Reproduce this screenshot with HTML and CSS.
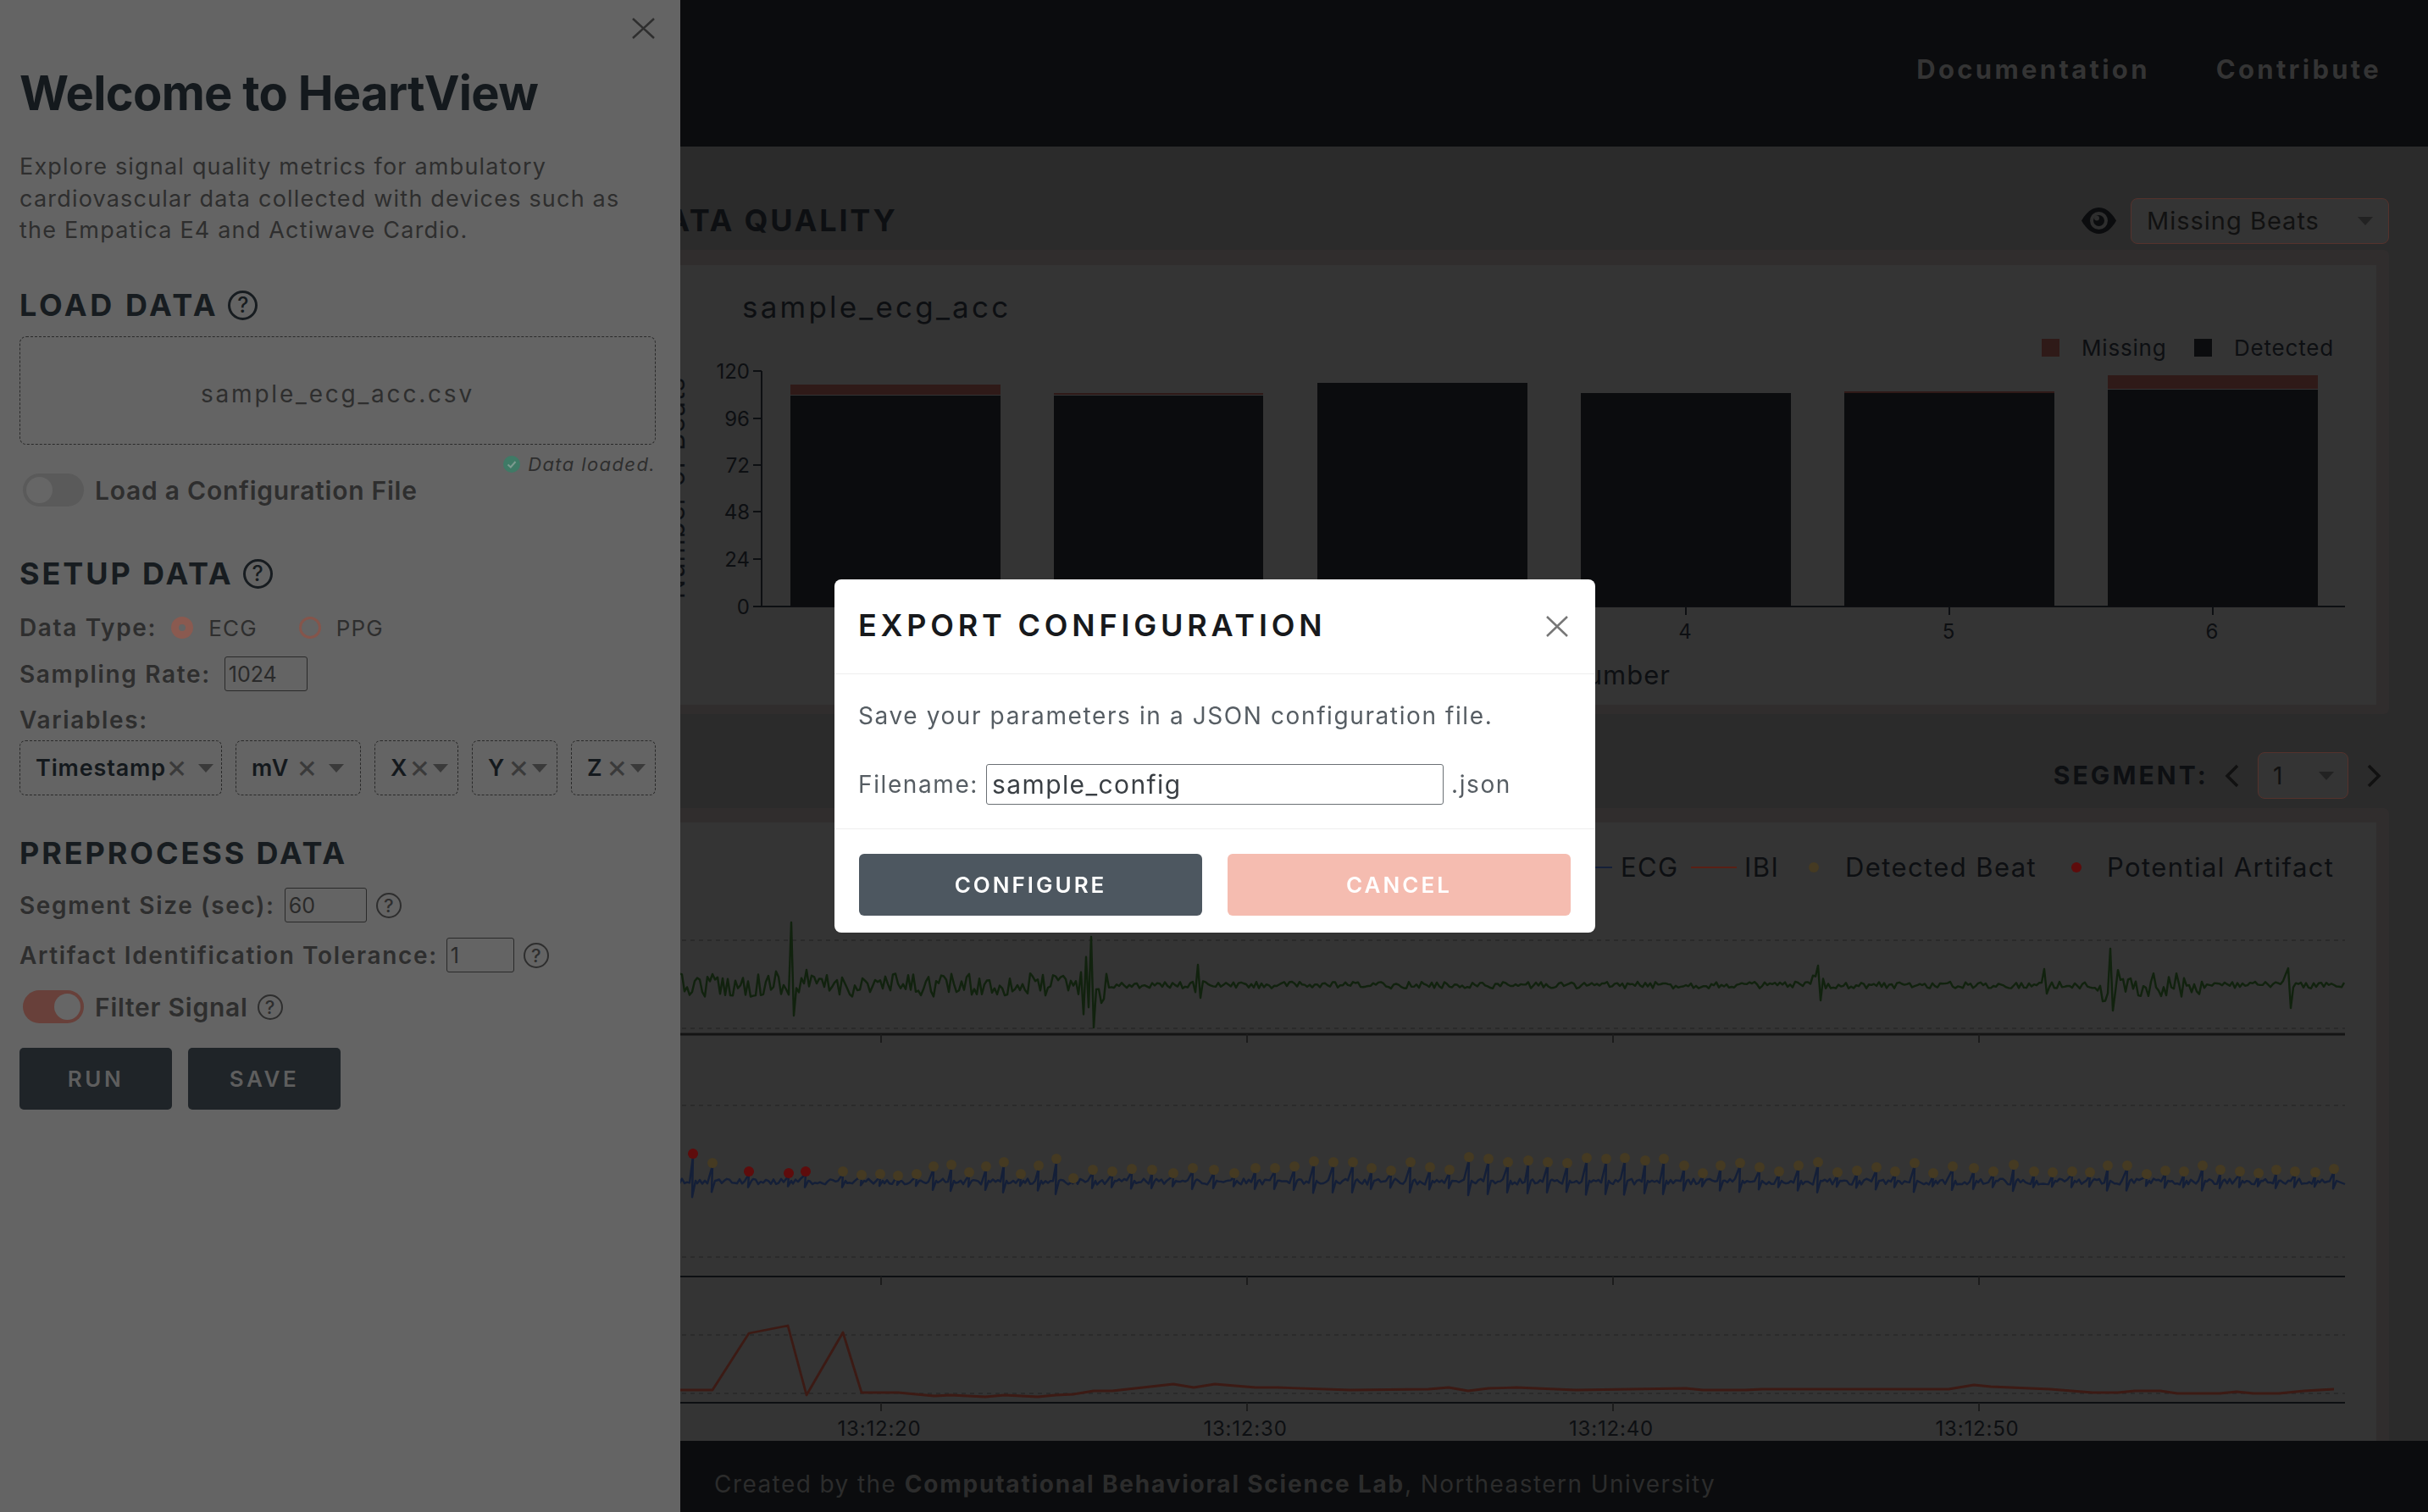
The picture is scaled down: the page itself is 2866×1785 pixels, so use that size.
FILE: index.html
```html
<!DOCTYPE html>
<html lang="en">
<head>
    <meta charset="UTF-8">
    <title>HeartView</title>
    <link rel="stylesheet" href="styles.css">
</head>
<body>

<header class="topbar">
    <a class="nav-link" href="#">Documentation</a>
    <a class="nav-link" href="#">Contribute</a>
</header>

<main class="content">
    <div class="section-head quality-head">
        <h2 class="section-title">DATA QUALITY</h2>
        <div class="head-controls">
            <svg class="eye" viewBox="0 0 41 31">
                <path class="eye-shape" d="M0 15.5C6 5 13 0 20.5 0S35 5 41 15.5C35 26 28 31 20.5 31S6 26 0 15.5Z"/>
                <circle class="eye-ring" cx="20.5" cy="15.5" r="10.5"/>
                <circle class="eye-shape" cx="20.5" cy="15.5" r="6.5"/>
                <circle class="eye-ring" cx="18" cy="12.5" r="3"/>
            </svg>
            <div class="page-select metric-select"><span>Missing Beats</span><i class="caret"></i></div>
        </div>
    </div>
    <div class="card card-quality">
        <svg class="plot" viewBox="775 313 2030 519">
            <text class="plot-title" x="876" y="375">sample_ecg_acc</text>
            <text class="plot-axis-title" transform="translate(808 576) rotate(-90)" text-anchor="middle">Number of Beats</text>

            <g class="tick-text" text-anchor="end">
                <text x="885" y="447">120</text>
                <text x="885" y="503">96</text>
                <text x="885" y="558">72</text>
                <text x="885" y="613">48</text>
                <text x="885" y="669">24</text>
                <text x="885" y="725">0</text>
            </g>
            <path class="axis" d="M899 438V716M889 438H899M889 494H899M889 549H899M889 604H899M889 660H899M889 716H899M899 716H2768"/>
            <path class="axis" d="M1990 716V726M2301 716V726M2612 716V726"/>

            <g class="bar-detected">
                <rect x="933" y="467" width="248" height="249"/>
                <rect x="1244" y="467" width="247" height="249"/>
                <rect x="1555" y="452" width="248" height="264"/>
                <rect x="1866" y="464" width="248" height="252"/>
                <rect x="2177" y="464" width="248" height="252"/>
                <rect x="2488" y="460" width="248" height="256"/>
            </g>
            <g class="bar-missing">
                <rect x="933" y="454" width="248" height="12"/>
                <rect x="1244" y="464" width="247" height="2"/>
                <rect x="2177" y="462" width="248" height="2"/>
                <rect x="2488" y="443" width="248" height="16"/>
            </g>

            <g class="tick-text" text-anchor="middle">
                <text x="1989" y="754">4</text>
                <text x="2300" y="754">5</text>
                <text x="2611" y="754">6</text>
            </g>
            <text class="plot-axis-title" x="1972" y="808" text-anchor="end">Beat Number</text>

            <rect class="bar-missing" x="2410" y="400" width="21" height="21"/>
            <text class="legend-small" x="2457" y="420">Missing</text>
            <rect class="bar-detected" x="2590" y="400" width="21" height="21"/>
            <text class="legend-small" x="2637" y="420">Detected</text>
        </svg>
    </div>

    <div class="section-head segment-head">
        <span class="segment-label">SEGMENT:</span>
        <svg class="chevron" viewBox="0 0 17 28"><path d="M15 2L3 14L15 26"/></svg>
        <div class="page-select segment-select"><span>1</span><i class="caret"></i></div>
        <svg class="chevron" viewBox="0 0 17 28"><path d="M2 2L14 14L2 26"/></svg>
    </div>
    <div class="card card-signal">
        <svg class="plot" viewBox="775 971 2030 730">
            <path class="legend-blue" d="M1860 1024H1903"/>
            <text class="legend-large" x="1913" y="1035">ECG</text>
            <path class="legend-red" d="M1996 1024H2050"/>
            <text class="legend-large" x="2059" y="1035">IBI</text>
            <circle class="dot-beat" cx="2141" cy="1024" r="6"/>
            <text class="legend-large" x="2178" y="1035">Detected Beat</text>
            <circle class="dot-artifact" cx="2451" cy="1024" r="6"/>
            <text class="legend-large" x="2487" y="1035">Potential Artifact</text>

            <path class="grid" d="M775 1110H2768M775 1214H2768M775 1305H2768M775 1484H2768M775 1576H2768M775 1645H2768"/>
            <path class="axis-thick" d="M775 1221H2768"/>
            <path class="axis" d="M775 1507H2768M775 1656H2768"/>
            <path class="axis-thin" d="M1040 1221V1231M1472 1221V1231M1904 1221V1231M2336 1221V1231"/>
            <path class="axis-thin" d="M1040 1507V1517M1472 1507V1517M1904 1507V1517M2336 1507V1517"/>
            <path class="axis-thin" d="M1040 1656V1666M1472 1656V1666M1904 1656V1666M2336 1656V1666"/>

            <path id="ecg-line" class="line-green"/>
            <path id="beat-line" class="line-blue"/>
            <g id="beat-dots"></g>
            <path id="ibi-line" class="line-red"/>

            <g class="tick-time" text-anchor="middle">
                <text x="1038" y="1695">13:12:20</text>
                <text x="1470" y="1695">13:12:30</text>
                <text x="1902" y="1695">13:12:40</text>
                <text x="2334" y="1695">13:12:50</text>
            </g>
        </svg>
    </div>
</main>

<footer class="page-footer">
    <p>Created by the <b>Computational Behavioral Science Lab</b>, Northeastern University</p>
</footer>

<!-- offcanvas -->
<aside class="sidebar">
    <div class="sidebar-close">
        <svg class="close-x" viewBox="0 0 27 25"><path d="M1 1L26 24M26 1L1 24"/></svg>
    </div>
    <h1>Welcome to HeartView</h1>
    <p class="intro">Explore signal quality metrics for ambulatory<br>cardiovascular data collected with devices such as<br>the Empatica E4 and Actiwave Cardio.</p>

    <h3 class="side-title side-first">LOAD DATA <span class="help help-big">?</span></h3>
    <div class="dropzone">sample_ecg_acc.csv</div>
    <div class="status">
        <svg class="status-icon" viewBox="0 0 20 20">
            <circle cx="10" cy="10" r="10"/>
            <path d="M5.5 10.5L8.8 13.5L14.5 7"/>
        </svg>
        <em>Data loaded.</em>
    </div>
    <label class="toggle-row toggle-config"><span class="toggle"></span>Load a Configuration File</label>

    <h3 class="side-title side-setup">SETUP DATA <span class="help help-big">?</span></h3>
    <div class="form-row radio-row">
        <span class="side-label">Data Type:</span>
        <span class="radio radio-on"></span><span class="radio-text">ECG</span>
        <span class="radio radio-off"></span><span class="radio-text">PPG</span>
    </div>
    <div class="form-row rate-row">
        <span class="side-label">Sampling Rate:</span>
        <input class="num-input rate-input" type="text" value="1024">
    </div>
    <div class="side-label variables-label">Variables:</div>
    <div class="chips">
        <div class="chip chip-wide"><span class="chip-value">Timestamp</span><span class="chip-x">×</span><i class="caret"></i></div>
        <div class="chip chip-wide"><span class="chip-value">mV</span><span class="chip-x">×</span><i class="caret"></i></div>
        <div class="chip"><span class="chip-value">X</span><span class="chip-x">×</span><i class="caret"></i></div>
        <div class="chip"><span class="chip-value">Y</span><span class="chip-x">×</span><i class="caret"></i></div>
        <div class="chip"><span class="chip-value">Z</span><span class="chip-x">×</span><i class="caret"></i></div>
    </div>

    <h3 class="side-title side-pre">PREPROCESS DATA</h3>
    <div class="form-row seg-row">
        <span class="side-label">Segment Size (sec):</span>
        <input class="num-input seg-input" type="text" value="60">
        <span class="help">?</span>
    </div>
    <div class="form-row tol-row">
        <span class="side-label">Artifact Identification Tolerance:</span>
        <input class="num-input tol-input" type="text" value="1">
        <span class="help">?</span>
    </div>
    <label class="toggle-row toggle-filter"><span class="toggle toggle-on"></span>Filter Signal <span class="help">?</span></label>
    <div class="side-buttons">
        <button class="side-btn">RUN</button>
        <button class="side-btn">SAVE</button>
    </div>
</aside>

<!-- export modal -->
<div class="modal-wrap">
    <div class="modal">
        <div class="modal-header">
            <h4>EXPORT CONFIGURATION</h4>
            <svg class="modal-x" viewBox="0 0 26 25"><path d="M1 1L25 24M25 1L1 24"/></svg>
        </div>
        <div class="modal-body">
            <p>Save your parameters in a JSON configuration file.</p>
            <div class="file-row">
                <label for="filename">Filename:</label>
                <input id="filename" type="text" value="sample_config">
                <span>.json</span>
            </div>
        </div>
        <div class="modal-footer">
            <button class="btn btn-configure">CONFIGURE</button>
            <button class="btn btn-cancel">CANCEL</button>
        </div>
    </div>
</div>

<script src="charts.js"></script>
</body>
</html>
```

FILE: styles.css
```css
* {
    box-sizing: border-box;
}
html, body {
    height: 100%;
}
body {
    margin: 0;
    display: flex;
    flex-direction: column;
    height: 1785px;
    overflow: hidden;
    background-color: #2b2b2b;
    color: #222;
    font-family: Inter, "Noto Sans", sans-serif;
}
h1, h2, h3, h4, p {
    margin: 0;
}

/* page behind the backdrop */
.topbar {
    flex: none;
    height: 173px;
    background-color: #0b0c0e;
    display: flex;
    justify-content: flex-end;
    align-items: center;
    gap: 78px;
    padding: 0 55px 10px 0;
}
.nav-link {
    color: #343434;
    font-size: 31px;
    font-weight: 700;
    letter-spacing: 3.3px;
    text-decoration: none;
}
.content {
    flex: 1;
    min-height: 0;
    overflow: hidden;
    padding: 0 46px 0 760px;
}
.section-head {
    display: flex;
    align-items: center;
}
.quality-head {
    height: 122px;
    padding-top: 60px;
    padding-bottom: 7px;
    justify-content: space-between;
}
.section-title {
    margin-bottom: 2px;
    color: #0d0f12;
    font-size: 36px;
    font-weight: 700;
    letter-spacing: 2.8px;
    white-space: nowrap;
}
.head-controls {
    display: flex;
    align-items: center;
    gap: 17px;
}
.eye {
    width: 41px;
    height: 31px;
}
.eye-shape {
    fill: #0b0c0e;
}
.eye-ring {
    fill: #2e2e2e;
}
.page-select {
    display: flex;
    align-items: center;
    justify-content: space-between;
    background-color: #343434;
    border: 1px solid #55322c;
    border-radius: 8px;
    color: #111;
    font-size: 29px;
    letter-spacing: 1px;
}
.metric-select {
    width: 305px;
    height: 54px;
    padding: 0 18px;
}
.caret {
    display: block;
    width: 0;
    height: 0;
    border-left: 9px solid transparent;
    border-right: 9px solid transparent;
    border-top: 10px solid #222;
}
.card {
    background-color: #302d2d;
    border-radius: 6px;
    padding: 18px 15px 11px 15px;
}
.card-quality {
    height: 548px;
}
.card-signal {
    height: 900px;
    padding-top: 17px;
}
.plot {
    display: block;
    width: 2030px;
    background-color: #343434;
}
.card-quality .plot {
    height: 519px;
}
.card-signal .plot {
    height: 730px;
}
.segment-head {
    height: 111px;
    padding: 45px 9px 11px 0;
    justify-content: flex-end;
}
.segment-label {
    color: #0d0f12;
    font-size: 30px;
    font-weight: 700;
    letter-spacing: 3.1px;
    margin: 0 19px 2px 0;
}
.chevron {
    width: 17px;
    height: 28px;
    fill: none;
    stroke: #111;
    stroke-width: 3.5;
}
.segment-select {
    width: 107px;
    height: 55px;
    margin: 0 22px;
    padding: 0 16px 0 17px;
    font-size: 28px;
}

/* chart pieces */
.plot-title {
    font-size: 35px;
    letter-spacing: 3.2px;
    fill: #0d0f12;
}
.plot-axis-title {
    font-size: 31px;
    letter-spacing: 1px;
    fill: #0d0f12;
}
.tick-text {
    font-size: 24px;
    fill: #0d0f12;
}
.tick-time {
    font-size: 24px;
    letter-spacing: 0.8px;
    fill: #0d0f12;
}
.legend-small {
    font-size: 26px;
    letter-spacing: 0.8px;
    fill: #0d0f12;
}
.legend-large {
    font-size: 31px;
    letter-spacing: 1.4px;
    fill: #0d0f12;
}
.axis {
    fill: none;
    stroke: #0d0f12;
    stroke-width: 2;
}
.axis-thick {
    stroke: #141414;
    stroke-width: 3;
}
.axis-thin {
    stroke: #1c1c1c;
    stroke-width: 2;
}
.grid {
    stroke: #2a2a2a;
    stroke-width: 2;
    stroke-dasharray: 5 5;
}
.bar-detected {
    fill: #0b0c0e;
}
.bar-missing {
    fill: #2f1a18;
}
.line-green, .line-blue, .line-red {
    fill: none;
    stroke-width: 2.4;
    stroke-linejoin: round;
}
.line-green {
    stroke: #11220e;
}
.line-blue {
    stroke: #141f38;
}
.line-red {
    stroke: #3c1a14;
    stroke-width: 2.8;
}
.legend-blue {
    stroke: #141f38;
    stroke-width: 2;
}
.legend-red {
    stroke: #5a1f14;
    stroke-width: 2;
}
.dot-beat {
    fill: #453a22;
}
.dot-artifact {
    fill: #5e0c0c;
}

.page-footer {
    flex: none;
    height: 84px;
    background-color: #0b0c0e;
    display: flex;
    align-items: center;
    padding: 18px 0 0 843px;
    color: #2c2c2c;
    font-size: 28px;
    letter-spacing: 1.43px;
}
.page-footer b {
    letter-spacing: 1.8px;
}

/* offcanvas */
.sidebar {
    position: fixed;
    left: 0;
    top: 0;
    bottom: 0;
    width: 803px;
    background-color: #646464;
    padding: 21px 29px 0 23px;
    color: #2e2e2e;
}
.sidebar-close {
    display: flex;
    justify-content: flex-end;
    height: 25px;
}
.close-x {
    width: 27px;
    height: 25px;
    margin-right: 1px;
    fill: none;
    stroke: #2e2e2e;
    stroke-width: 2.5;
}
.sidebar h1 {
    margin-top: 34px;
    color: #14191d;
    font-size: 56px;
    font-weight: 700;
    line-height: 60px;
    letter-spacing: -0.7px;
    white-space: nowrap;
}
.intro {
    margin-top: 38px;
    font-size: 27px;
    line-height: 37.5px;
    letter-spacing: 1.2px;
    white-space: nowrap;
}
.side-title {
    height: 40px;
    display: flex;
    align-items: center;
    gap: 11px;
    color: #171c20;
    font-size: 36px;
    font-weight: 700;
    letter-spacing: 2.9px;
    white-space: nowrap;
}
.side-first {
    margin-top: 49.5px;
    letter-spacing: 3.6px;
}
.side-setup { margin-top: 59px; }
.side-pre { margin-top: 48px; }
.help {
    flex: none;
    width: 30px;
    height: 30px;
    border: 2.5px solid #2e2e2e;
    border-radius: 50%;
    display: inline-flex;
    align-items: center;
    justify-content: center;
    color: #2e2e2e;
    font-size: 22px;
    font-weight: 500;
    letter-spacing: 0;
}
.help-big {
    width: 35px;
    height: 35px;
    border-width: 3px;
    border-color: #171c20;
    color: #171c20;
    font-size: 25px;
}
.dropzone {
    margin-top: 17px;
    height: 128px;
    border: 1px dashed #2a2a2a;
    border-radius: 8px;
    display: flex;
    align-items: center;
    justify-content: center;
    padding-top: 8px;
    font-size: 28px;
    letter-spacing: 2.8px;
}
.status {
    margin-top: 13px;
    height: 20px;
    display: flex;
    justify-content: flex-end;
    align-items: center;
    gap: 9px;
    font-size: 22px;
    letter-spacing: 1.4px;
}
.status-icon {
    flex: none;
    width: 20px;
    height: 20px;
}
.status-icon circle {
    fill: #3f7a66;
}
.status-icon path {
    fill: none;
    stroke: #7d9a90;
    stroke-width: 2;
}
.toggle-row {
    display: flex;
    align-items: center;
    height: 39px;
    font-size: 30px;
    font-weight: 600;
    letter-spacing: 0.75px;
    white-space: nowrap;
}
.toggle-config {
    margin-top: 1px;
}
.toggle-filter {
    margin-top: 21px;
}
.toggle {
    flex: none;
    width: 72px;
    height: 39px;
    margin: 0 13px 0 4px;
    border-radius: 20px;
    background-color: #5a5a5a;
    padding: 4px;
}
.toggle::after {
    content: "";
    display: block;
    width: 31px;
    height: 31px;
    border-radius: 50%;
    background-color: #666;
}
.toggle-on {
    background-color: #68403a;
    display: flex;
    justify-content: flex-end;
}
.toggle-filter .help {
    margin-left: 11px;
}
.side-label {
    font-size: 28px;
    font-weight: 600;
    letter-spacing: 1.65px;
    white-space: nowrap;
}
.form-row {
    display: flex;
    align-items: center;
}
.radio-row {
    margin-top: 31px;
    height: 26px;
}
.radio {
    flex: none;
    width: 26px;
    height: 26px;
    border-radius: 50%;
}
.radio-on {
    margin-left: 17px;
    border: 9px solid #8a5a50;
}
.radio-off {
    margin-left: 49px;
    border: 3.5px solid #85554b;
}
.radio-text {
    margin-left: 18px;
    font-size: 26px;
    letter-spacing: 1.2px;
}
.num-input {
    height: 41px;
    background: transparent;
    border: 1px solid #2a2a2a;
    border-radius: 3px;
    padding: 0 0 0 4px;
    color: #2a2a2a;
    font-family: inherit;
    font-size: 25px;
}
.rate-row {
    margin-top: 21px;
    gap: 16px;
}
.rate-input { width: 98px; }
.variables-label {
    margin-top: 19px;
    line-height: 30px;
}
.chips {
    margin-top: 9px;
    display: grid;
    grid-template-columns: 239px 148px 99px 101px 100px;
    gap: 16px;
}
.chip {
    height: 65px;
    border: 1px dashed #2a2a2a;
    border-radius: 7px;
    display: flex;
    align-items: center;
    padding: 0 11px 0 18px;
    color: #14191d;
    font-size: 27px;
    font-weight: 600;
    letter-spacing: 0.85px;
}
.chip-value {
    flex: 1;
    white-space: nowrap;
}
.chip-x {
    margin: 0 3px 6px 0;
    color: #3a3a3a;
    font-size: 38px;
    font-weight: 400;
    line-height: 1;
    letter-spacing: 0;
}
.chip .caret {
    border-top-color: #3a3a3a;
}
.chip-wide {
    padding-right: 19px;
}
.chip-wide .chip-x {
    margin-right: 13px;
}
.seg-row {
    margin-top: 21px;
}
.seg-input {
    width: 97px;
    margin: 0 11px;
}
.tol-row {
    margin-top: 18px;
}
.tol-input {
    width: 80px;
    margin: 0 11px 0 10px;
}
.side-buttons {
    margin-top: 29px;
    display: flex;
    gap: 19px;
}
.side-btn {
    width: 180px;
    height: 73px;
    background-color: #1f2428;
    border: none;
    border-radius: 5px;
    color: #5e5e5e;
    font-family: inherit;
    font-size: 26px;
    font-weight: 600;
    letter-spacing: 3.5px;
}

/* export modal */
.modal-wrap {
    position: fixed;
    top: 0;
    left: 0;
    right: 0;
    bottom: 0;
    display: flex;
    justify-content: center;
    align-items: center;
    padding-left: 2px;
}
.modal {
    width: 898px;
    background-color: #fff;
    border-radius: 8px;
    padding-bottom: 20px;
}
.modal-header {
    height: 112px;
    display: flex;
    justify-content: space-between;
    align-items: center;
    padding: 0 32px 4px 28px;
    border-bottom: 1px solid #eee;
}
.modal-header h4 {
    color: #17191c;
    font-size: 36px;
    font-weight: 600;
    letter-spacing: 4.8px;
    white-space: nowrap;
}
.modal-x {
    width: 26px;
    height: 25px;
    margin-top: 3px;
    fill: none;
    stroke: #777;
    stroke-width: 2.5;
}
.modal-body {
    height: 183px;
    padding: 32px 28px 0 28px;
    border-bottom: 1px solid #eee;
    color: #565d63;
    font-size: 28px;
    letter-spacing: 1.6px;
}
.file-row {
    margin-top: 40px;
    display: flex;
    align-items: center;
}
.file-row input {
    width: 540px;
    height: 48px;
    margin: 0 9px;
    border: 1px solid #6b7075;
    border-radius: 3px;
    padding: 0 6px;
    color: #3a3f44;
    font-family: inherit;
    font-size: 30px;
    letter-spacing: 1.4px;
}
.modal-footer {
    display: flex;
    gap: 30px;
    padding: 29px 29px 0 29px;
}
.btn {
    flex: 1;
    height: 73px;
    border: none;
    border-radius: 6px;
    color: #fff;
    font-family: inherit;
    font-size: 26px;
    font-weight: 600;
    letter-spacing: 3px;
}
.btn-configure {
    background-color: #4d5760;
}
.btn-cancel {
    background-color: #f5bcb0;
}
```

FILE: charts.js
```js
// simple seeded noise so the picture stays the same on every load
let seed = 12345;
function rnd() {
    seed = (seed * 16807) % 2147483647;
    return seed / 2147483647 * 2 - 1;
}

function toPath(points) {
    return points.map((p, i) => (i ? 'L' : 'M') + p[0].toFixed(1) + ' ' + p[1].toFixed(1)).join('');
}

// ecg: quiet baseline with a few bursts [x, up, down, half width]
const bursts = [
    [935, 74, 36, 20], [1290, 57, 50, 16], [1415, 24, 15, 6], [2147, 23, 18, 8],
    [2415, 19, 10, 8], [2493, 43, 30, 18], [2702, 20, 27, 8]
];
const ecg = [];
for (let x = 790; x <= 2768; x += 3) {
    let amp = x < 1307 ? 14 : 4;
    if (x > 2480 && x < 2600) amp = 14;
    let y = 1163 + rnd() * amp;
    for (const b of bursts) {
        const dx = x - b[0];
        if (dx >= -3 && dx < 0) {
            y = 1163 - b[1];
        } else if (dx >= 0 && dx < 3) {
            y = 1163 + b[2];
        } else if (Math.abs(dx) < b[3]) {
            y = 1163 + rnd() * b[2] * 0.7;
        }
    }
    ecg.push([x, y]);
}
document.getElementById('ecg-line').setAttribute('d', toPath(ecg));

// beats read off the trace: [x, y of the dot]
const artifacts = [818, 884, 931, 951];
const beats = [
    [818, 1362], [841, 1373], [884, 1383], [931, 1385], [951, 1383], [995, 1383], [1017, 1387],
    [1039, 1386], [1060, 1388], [1082, 1386], [1102, 1377], [1123, 1375], [1144, 1384], [1164, 1377],
    [1185, 1372], [1205, 1386], [1226, 1376], [1247, 1368], [1267, 1391], [1290, 1381], [1313, 1383],
    [1336, 1380], [1360, 1381], [1385, 1385], [1408, 1379], [1433, 1381], [1457, 1385], [1482, 1379],
    [1505, 1379], [1528, 1377], [1551, 1371], [1574, 1372], [1597, 1372], [1619, 1379], [1642, 1382],
    [1665, 1372], [1688, 1378], [1711, 1381], [1734, 1366], [1757, 1368], [1780, 1372], [1804, 1370],
    [1827, 1372], [1850, 1373], [1873, 1367], [1896, 1368], [1918, 1367], [1942, 1370], [1964, 1368],
    [1988, 1376], [2010, 1385], [2031, 1376], [2054, 1373], [2077, 1378], [2100, 1383], [2123, 1376],
    [2146, 1372], [2169, 1384], [2192, 1382], [2215, 1378], [2237, 1383], [2260, 1373], [2282, 1385],
    [2305, 1377], [2330, 1379], [2353, 1383], [2377, 1375], [2401, 1383], [2423, 1384], [2446, 1383],
    [2467, 1384], [2488, 1376], [2511, 1376], [2534, 1386], [2556, 1382], [2578, 1383], [2600, 1376],
    [2621, 1381], [2644, 1383], [2666, 1385], [2687, 1381], [2709, 1383], [2733, 1384], [2755, 1380]
];

const beatPoints = [];
let at = 790;
for (const b of beats) {
    while (at < b[0] - 3) {
        beatPoints.push([at, 1395 + rnd() * 3.5]);
        at += 3;
    }
    const depth = (1395 - b[1]) * 0.55;
    beatPoints.push([b[0], b[1] + 3]);
    beatPoints.push([b[0] - 1, 1395 + depth]);
    beatPoints.push([b[0] + 3, 1394]);
    at = b[0] + 5;
}
beatPoints.push([2768, 1398]);
document.getElementById('beat-line').setAttribute('d', toPath(beatPoints));

const dots = document.getElementById('beat-dots');
for (const b of beats) {
    const dot = document.createElementNS('http://www.w3.org/2000/svg', 'circle');
    dot.setAttribute('cx', b[0]);
    dot.setAttribute('cy', b[1]);
    dot.setAttribute('r', 6);
    dot.setAttribute('class', artifacts.includes(b[0]) ? 'dot-artifact' : 'dot-beat');
    dots.appendChild(dot);
}

// ibi
const ibi = [
    [803, 1641], [841, 1641], [884, 1574], [930, 1565], [952, 1647], [995, 1573], [1017, 1644],
    [1060, 1644], [1103, 1648], [1122, 1647], [1163, 1649], [1186, 1647], [1225, 1649], [1246, 1647],
    [1267, 1646], [1291, 1642], [1313, 1642], [1385, 1634], [1409, 1638], [1434, 1634], [1482, 1638],
    [1508, 1638], [1594, 1641], [1686, 1640], [1710, 1638], [1733, 1642], [1757, 1639], [1790, 1638],
    [1860, 1641], [1990, 1639], [2010, 1641], [2060, 1641], [2080, 1640], [2300, 1640], [2330, 1635],
    [2350, 1637], [2420, 1640], [2470, 1644], [2500, 1644], [2520, 1642], [2550, 1642], [2570, 1645],
    [2620, 1645], [2640, 1643], [2660, 1645], [2690, 1645], [2720, 1642], [2755, 1640]
];
document.getElementById('ibi-line').setAttribute('d', toPath(ibi));
```
